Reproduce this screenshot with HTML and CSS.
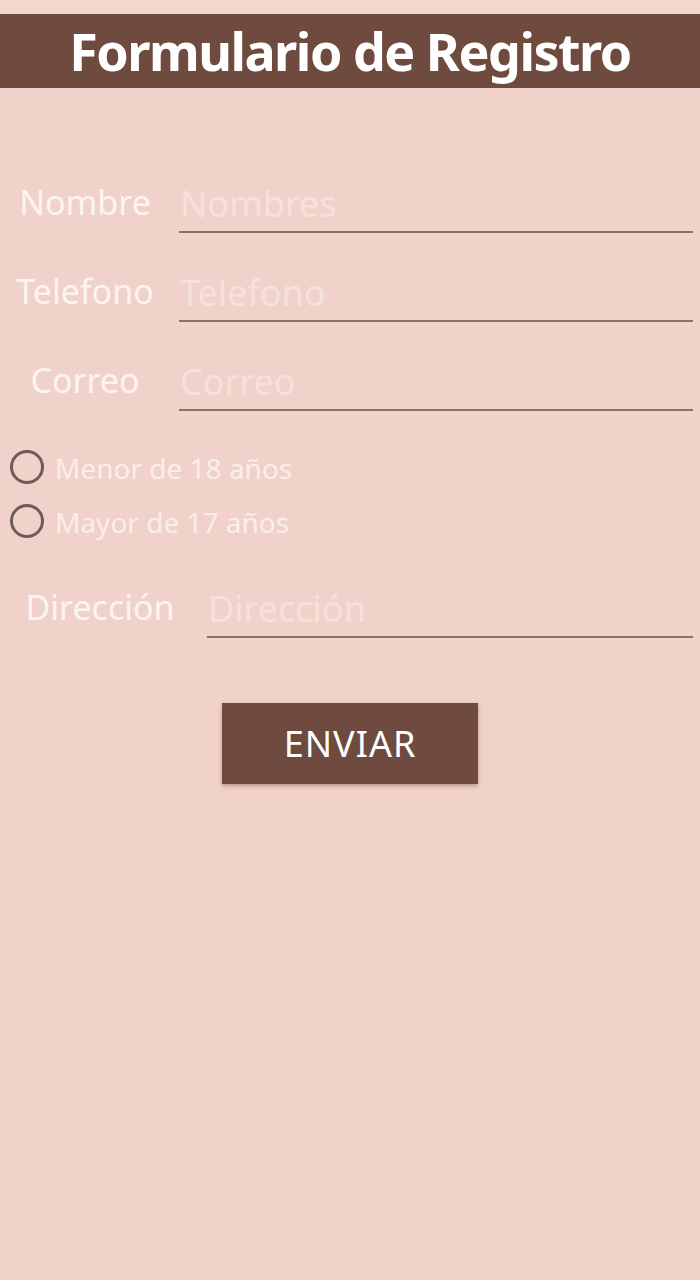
FILE: index.html
```html
<!DOCTYPE html>
<html lang="es">
<head>
<meta charset="utf-8">
<link rel="stylesheet" href="styles.css">
</head>
<body>
<div class="status"></div>
<header class="bar"><h1 class="title">Formulario de Registro</h1></header>
<main class="form">
  <div class="row">
    <label class="label">Nombre</label>
    <div class="input"><span class="ph">Nombres</span></div>
  </div>
  <div class="row">
    <label class="label">Telefono</label>
    <div class="input"><span class="ph">Telefono</span></div>
  </div>
  <div class="row">
    <label class="label">Correo</label>
    <div class="input"><span class="ph">Correo</span></div>
  </div>
  <div class="radios">
    <div class="radio"><span class="circle"></span><span class="rtext">Menor de 18 años</span></div>
    <div class="radio"><span class="circle"></span><span class="rtext">Mayor de 17 años</span></div>
  </div>
  <div class="row row-wide">
    <label class="label label-wide">Dirección</label>
    <div class="input"><span class="ph">Dirección</span></div>
  </div>
  <div class="actions"><button class="btn">ENVIAR</button></div>
</main>
</body>
</html>
```
FILE: styles.css
```css
html, body { margin: 0; padding: 0; }
body {
  background: #f0d2cb;
  font-family: "Noto Sans", "Open Sans", sans-serif;
  width: 700px;
  height: 1280px;
  overflow: hidden;
}
.status { height: 14px; background: #f2d8cd; }
.bar {
  height: 74px;
  background: #6f4a3f;
  display: flex;
  align-items: center;
  justify-content: center;
}
.title {
  margin: 0;
  color: #ffffff;
  font-size: 52px;
  font-weight: 700;
  line-height: 1;
  letter-spacing: -1.5px;
}
.form { padding-top: 87px; }
.row {
  display: flex;
  align-items: flex-end;
  height: 58px;
  margin-bottom: 31px;
  padding-right: 7px;
}
.label {
  width: 170px;
  text-align: center;
  color: #fdf4f0;
  font-size: 34px;
  line-height: 58px;
  flex: none;
  margin-bottom: 2px;
}
.label-wide { width: 200px; }
.input {
  flex: 1;
  margin-left: 9px;
  height: 56px;
  border-bottom: 2px solid #8d7068;
  display: flex;
  align-items: center;
}
.row-wide .input { margin-left: 7px; }
.ph { color: #f6e1da; font-size: 36px; padding-left: 1px; }
.radios {
  margin-top: 38px;
  padding-left: 10px;
  display: flex;
  flex-direction: column;
  gap: 18px;
  margin-bottom: 41px;
}
.radio { display: flex; align-items: center; height: 36px; }
.circle {
  width: 28px; height: 28px;
  border: 3px solid #6e5b56;
  border-radius: 50%;
  flex: none;
}
.rtext { color: #fbeee9; font-size: 28px; margin-left: 11px; position: relative; top: 1px; }
.actions { display: flex; justify-content: center; padding-top: 34px; }
.btn {
  width: 256px;
  height: 81px;
  background: #6f4a3f;
  border: none;
  color: #ffffff;
  font-family: "Noto Sans", sans-serif;
  font-size: 36px;
  letter-spacing: 1px;
  box-shadow: 0 2px 4px rgba(80, 40, 30, 0.35);
  padding: 0;
}
```
